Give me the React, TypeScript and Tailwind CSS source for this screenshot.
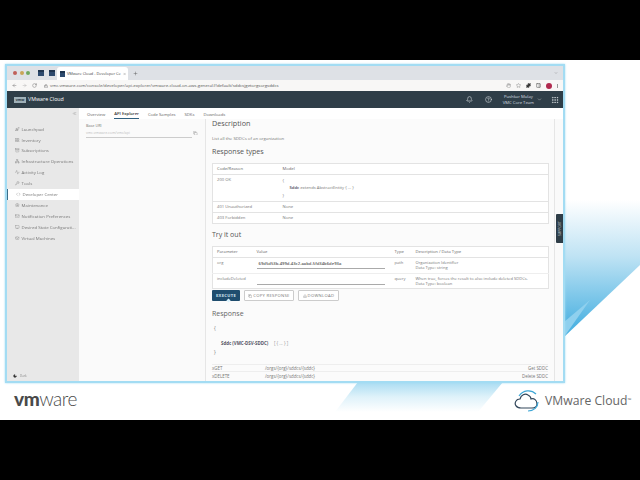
import React from "react";
import { Bell, ChevronDown, ChevronsLeft, CircleHelp, Copy, Download, Grip, Lock, Puzzle, RotateCw, Star, ArrowLeft, ArrowRight, Plus, X, Rocket, LayoutGrid, Archive, Network, Activity, Wrench, Code, Settings, Mail, Monitor, Box, Moon, Hand, PanelRight } from "lucide-react";

const nav = [
  [Rocket, "Launchpad"],
  [LayoutGrid, "Inventory"],
  [Archive, "Subscriptions"],
  [Network, "Infrastructure Operations"],
  [Activity, "Activity Log"],
  [Wrench, "Tools"],
  [Code, "Developer Center"],
  [Settings, "Maintenance"],
  [Mail, "Notification Preferences"],
  [Monitor, "Desired State Configurati..."],
  [Box, "Virtual Machines"],
] as const;

function TabIcon() {
  return <div className="w-[6px] h-[6px] bg-[#2d4a6e] border-t-2 border-[#1f3550]" />;
}

export default function App() {
  return (
    <div className="w-[640px] h-[480px] bg-black flex flex-col font-['Open_Sans','Liberation_Sans',sans-serif] overflow-hidden">
      <div className="h-[60px] shrink-0" />
      <div className="relative h-[360px] shrink-0 bg-white">
        <svg className="absolute inset-0" width="640" height="360" viewBox="0 0 640 360">
          <defs>
            <linearGradient id="b" x1="0" y1="0" x2="0" y2="1">
              <stop offset="0" stopColor="#a9dcf2" />
              <stop offset="0.5" stopColor="#dff2fa" />
              <stop offset="1" stopColor="#ffffff" />
            </linearGradient>
            <linearGradient id="c" gradientUnits="userSpaceOnUse" x1="0" y1="140" x2="0" y2="265">
              <stop offset="0" stopColor="#ffffff" />
              <stop offset="0.45" stopColor="#bfe3f4" />
              <stop offset="1" stopColor="#4fb3e2" />
            </linearGradient>
          </defs>
          <polygon points="358,322 503,322 478,352 335,352" fill="url(#b)" />
          <polygon points="564,140 640,140 640,205 564,277" fill="url(#c)" />
          <polygon points="564,262 590,240 564,277" fill="#8fd0ee" />
        </svg>
        <div className="relative pl-[5px] pt-[4px]">
          <div className="w-[560px] h-[319px] border-2 border-[#a3dcf3] shadow-[0_0_2px_#a3dcf3] bg-white flex flex-col overflow-hidden blur-[0.3px]">
            <div className="h-[14px] shrink-0 bg-[#dee1e6] flex items-center pl-[6px] pr-[3px]">
              <div className="flex gap-[2.5px] mr-[8px]">
                <div className="w-[4px] h-[4px] rounded-full bg-[#c0605a]" />
                <div className="w-[4px] h-[4px] rounded-full bg-[#c9a557]" />
                <div className="w-[4px] h-[4px] rounded-full bg-[#70a860]" />
              </div>
              <div className="flex gap-[5px] mr-[2px]"><TabIcon /><TabIcon /></div>
              <div className="w-[71px] h-[13px] mt-[1px] bg-white rounded-t-[3px] flex items-center pl-[3px] pr-[2px] gap-[2px]">
                <TabIcon />
                <span className="text-[3.9px] text-[#444] whitespace-nowrap flex-1">VMware Cloud - Developer Ce</span>
                <X size={4} className="text-[#555]" />
              </div>
              <Plus size={5} className="ml-[5px] text-[#555]" />
              <div className="flex-1" />
              <ChevronDown size={4} className="text-[#777] mr-[2px]" />
            </div>
            <div className="h-[11px] shrink-0 bg-[#f8f7f6] flex items-center pl-[5px] pr-[5px]">
              <ArrowLeft size={5} className="text-[#666] mr-[5px]" />
              <ArrowRight size={5} className="text-[#aaa] mr-[5px]" />
              <RotateCw size={5} className="text-[#666] mr-[7px]" />
              <Lock size={4} className="text-[#555] mr-[2px]" />
              <span className="text-[4.33px] text-[#555] whitespace-nowrap flex-1">vmc.vmware.com/console/developer/api-explorer/vmware-cloud-on-aws-general#!default/sddcsjgetorgsorgsddcs</span>
              <div className="flex items-center gap-[5px]">
                <Hand size={5} className="text-[#888]" />
                <Star size={5} className="text-[#777]" />
                <Puzzle size={5} className="text-[#333] fill-[#333]" />
                <PanelRight size={5} className="text-[#333]" />
                <div className="w-[6px] h-[6px] rounded-full bg-[#b02a4f]" />
                <div className="w-[1px] h-[4px] bg-[#999]" />
              </div>
            </div>
            <div className="h-[17px] shrink-0 bg-[#2f3e48] flex items-center pl-[7px] pr-[4px] text-white">
              <div className="w-[12px] h-[6px] bg-[#9fb0b8] text-[3.6px] font-bold leading-[6px] text-center text-[#22313a] mr-[2px]">vmw</div>
              <span className="text-[5.3px] whitespace-nowrap flex-1">VMware Cloud</span>
              <Bell size={7} className="text-[#d5dbde] mr-[12px]" />
              <CircleHelp size={7} className="text-[#d5dbde] mr-[11px]" />
              <div className="text-[4.2px] leading-[6px] text-center whitespace-nowrap text-[#d8dee1] mr-[3px]"><div>Pushkar Mulay</div><div>VMC Core Team</div></div>
              <ChevronDown size={5} className="text-[#d5dbde] mr-[9px]" />
              <Grip size={8} className="text-[#d5dbde]" />
            </div>
            <div className="flex-1 min-h-0 flex relative">
              <aside className="w-[72px] shrink-0 bg-[#e8e8e8] flex flex-col relative">
                <div className="h-[11px] flex items-center justify-end pr-[2px]"><ChevronsLeft size={5} className="text-[#888]" /></div>
                <div className="flex flex-col mt-[4.5px]">
                  {nav.map(([I, t]) => {
                    const active = t === "Developer Center";
                    return (
                      <div key={t} className={`h-[10.9px] flex items-center gap-[2px] whitespace-nowrap text-[4.35px] text-[#777] ${active ? "bg-white border-l-[1px] border-[#3b6e8a] pl-[8px]" : "pl-[8px]"}`}>
                        <I size={4.5} className="text-[#888] shrink-0" />
                        <span>{t}</span>
                      </div>
                    );
                  })}
                </div>
                <div className="mt-auto h-[10px] flex items-center pl-[6px] gap-[3px]">
                  <Moon size={4} className="text-[#333] fill-[#333]" />
                  <span className="text-[3px] text-[#888]">Dark</span>
                </div>
              </aside>
              <main className="flex-1 min-w-0 flex flex-col bg-[#fafafa]">
                <div className="h-[11px] shrink-0 flex items-end gap-[9px] pl-[8px] text-[4.2px] text-[#666] bg-white">
                  <span className="pb-[1px]">Overview</span>
                  <span className="pb-[1px] border-b border-[#2f5f7f] text-[#333] font-semibold">API Explorer</span>
                  <span className="pb-[1px]">Code Samples</span>
                  <span className="pb-[1px]">SDKs</span>
                  <span className="pb-[1px]">Downloads</span>
                </div>
                <div className="flex-1 min-h-0 flex">
                  <div className="w-[126px] shrink-0 pl-[7px] pt-[4px]">
                    <div className="text-[3.8px] text-[#777]">Base URI</div>
                    <div className="flex items-center w-[114px]">
                      <div className="w-[106px] border-b border-[#ccc] text-[3.6px] text-[#bbb] pt-[1px] pb-[1.5px]">vmc.vmware.com/vmc/api</div>
                      <Copy size={4.5} className="text-[#888] ml-[1px]" />
                    </div>
                  </div>
                  <div className="flex-1 min-w-0 border-l border-r border-[#e6e6e6] bg-[#fbfbfb] pl-[6px] pr-[6px] mr-[8px] relative overflow-hidden">
                    <div className="text-[7.2px] leading-[9px] text-[#555]">Description</div>
                    <div className="text-[4.3px] text-[#777] mt-[7px]">List all the SDDCs of an organization</div>
                    <div className="text-[7.1px] leading-[9px] text-[#555] mt-[5.5px]">Response types</div>
                    <table className="w-[337px] mt-[7px] text-[4.2px] text-[#777] border border-[#e3e3e3] bg-white border-collapse">
                      <tbody>
                        <tr className="h-[11px] border-b border-[#e3e3e3] text-[#666]"><td className="w-[70px] pl-[4px]">Code/Reason</td><td>Model</td></tr>
                        <tr className="h-[27px] border-b border-[#e3e3e3] align-top">
                          <td className="pl-[4px] pt-[2px]">200 OK</td>
                          <td className="leading-[7.5px] pt-[2px]"><div>{"{"}</div><div className="pl-[7px]"><span className="font-semibold text-[#445]">Sddc</span> extends AbstractEntity {"{ ... }"}</div><div>{"}"}</div></td>
                        </tr>
                        <tr className="h-[11px] border-b border-[#e3e3e3]"><td className="pl-[4px]">401 Unauthorized</td><td>None</td></tr>
                        <tr className="h-[11px]"><td className="pl-[4px]">403 Forbidden</td><td>None</td></tr>
                      </tbody>
                    </table>
                    <div className="text-[7px] leading-[9px] text-[#555] mt-[6.5px]">Try it out</div>
                    <table className="w-[337px] mt-[7px] text-[4.2px] text-[#777] border border-[#e3e3e3] bg-white border-collapse">
                      <tbody>
                        <tr className="h-[11px] border-b border-[#e3e3e3] text-[#666]"><td className="w-[44px] pl-[4px]">Parameter</td><td className="w-[138px]">Value</td><td className="w-[21px]">Type</td><td>Description / Data Type</td></tr>
                        <tr className="h-[15.5px] border-b border-[#eee] align-top text-[4.1px]">
                          <td className="pl-[4px] pt-[2px]">org</td>
                          <td className="pt-[2px]"><div className="w-[128px] border-b border-[#aaa] pl-[2px] h-[9px] text-[#555] font-semibold text-[4.2px] leading-[7px]">69d5d53b-499d-43c2-aabd-5fd34b6de93a</div></td>
                          <td className="pt-[2px]">path</td>
                          <td className="pt-[2px] leading-[5px]"><div>Organization Identifier</div><div>Data Type: string</div></td>
                        </tr>
                        <tr className="h-[15px] align-top text-[4.1px]">
                          <td className="pl-[4px] pt-[2px]">includeDeleted</td>
                          <td className="pt-[2px]"><div className="w-[128px] border-b border-[#aaa] h-[9px]" /></td>
                          <td className="pt-[2px]">query</td>
                          <td className="pt-[2px] leading-[5px] whitespace-nowrap"><div>When true, forces the result to also include deleted SDDCs.</div><div>Data Type: boolean</div></td>
                        </tr>
                      </tbody>
                    </table>
                    <div className="flex gap-[4px] mt-[1.5px] text-[4.2px] tracking-[0.3px]">
                      <div className="w-[28px] h-[10.5px] rounded-[1px] bg-[#1f4d6e] text-[#cfe3ef] font-bold flex items-center justify-center relative">EXECUTE
                        <div className="absolute -bottom-[1px] left-[15px] w-[3px] h-[3px] rotate-45 bg-[#d9f3ff]" />
                      </div>
                      <div className="w-[50px] h-[10.5px] rounded-[1px] border border-[#ccc] text-[#777] bg-white flex items-center justify-center gap-[1px]"><Copy size={4} />COPY RESPONSE</div>
                      <div className="w-[41px] h-[10.5px] rounded-[1px] border border-[#ccc] text-[#777] bg-white flex items-center justify-center gap-[1px]"><Download size={4} />DOWNLOAD</div>
                    </div>
                    <div className="text-[7px] leading-[9px] text-[#666] mt-[8px]">Response</div>
                    <div className="text-[4.6px] text-[#777] mt-[7px] pl-[2px] leading-[6px]">{"{"}</div>
                    <div className="text-[4.4px] text-[#556] mt-[9px] pl-[9px] leading-[6px] whitespace-pre"><span className="font-bold">Sddc (VMC-DSV-SDDC)</span>{"     "}<span className="text-[#999]">[ {"{ ... }"} ]</span></div>
                    <div className="text-[4.6px] text-[#777] mt-[3px] pl-[2px] leading-[6px]">{"}"}</div>
                    <div className="border-t border-[#eee] mt-[9px] text-[4.4px] text-[#777]">
                      <div className="h-[7.5px] flex items-center border-b border-[#eee]"><span className="w-[53px]">xGET</span><span className="flex-1">/orgs/{"{org}"}/sddcs/{"{sddc}"}</span><span>Get SDDC</span></div>
                      <div className="h-[7.5px] flex items-center"><span className="w-[53px]">xDELETE</span><span className="flex-1">/orgs/{"{org}"}/sddcs/{"{sddc}"}</span><span>Delete SDDC</span></div>
                    </div>
                  </div>
                </div>
              </main>
              <div className="absolute right-0 top-[106px] w-[7px] h-[29px] bg-[#2f3e48] rounded-l-[1px] flex items-center justify-center">
                <span className="text-[3.4px] text-[#c8d2d8] -rotate-90 whitespace-nowrap">SUPPORT</span>
              </div>
            </div>
          </div>
        </div>
        <div className="absolute left-[14px] top-[329px] leading-none text-[19px] text-[#4a4a4a] font-['Lato','Liberation_Sans',sans-serif] tracking-[-0.5px]"><span className="font-black">vm</span><span className="font-light">ware</span></div>
        <div className="absolute left-[514px] top-[330px] flex items-center gap-[5px]">
          <svg width="26" height="22" viewBox="0 0 26 22" fill="none">
            <path d="M7 18 C2 18 0 14 2 11 C3 9 5 9 6 9 C7 5 11 3 14 5 C16 6 17 8 17 9 C20 8 23 10 23 14 C23 17 20 18 18 18 Z" stroke="#33475b" strokeWidth="1.2" />
            <path d="M5 6 C9 0 17 -1 22 4" stroke="#3fa7d6" strokeWidth="1.2" />
            <path d="M24 12 C24 17 20 21 14 21" stroke="#3fa7d6" strokeWidth="1.2" />
          </svg>
          <span className="text-[12.2px] text-[#666] whitespace-nowrap font-['Open_Sans',sans-serif]">VMware Cloud<sup className="text-[5px]">™</sup></span>
        </div>
      </div>
      <div className="h-[60px] shrink-0" />
    </div>
  );
}
